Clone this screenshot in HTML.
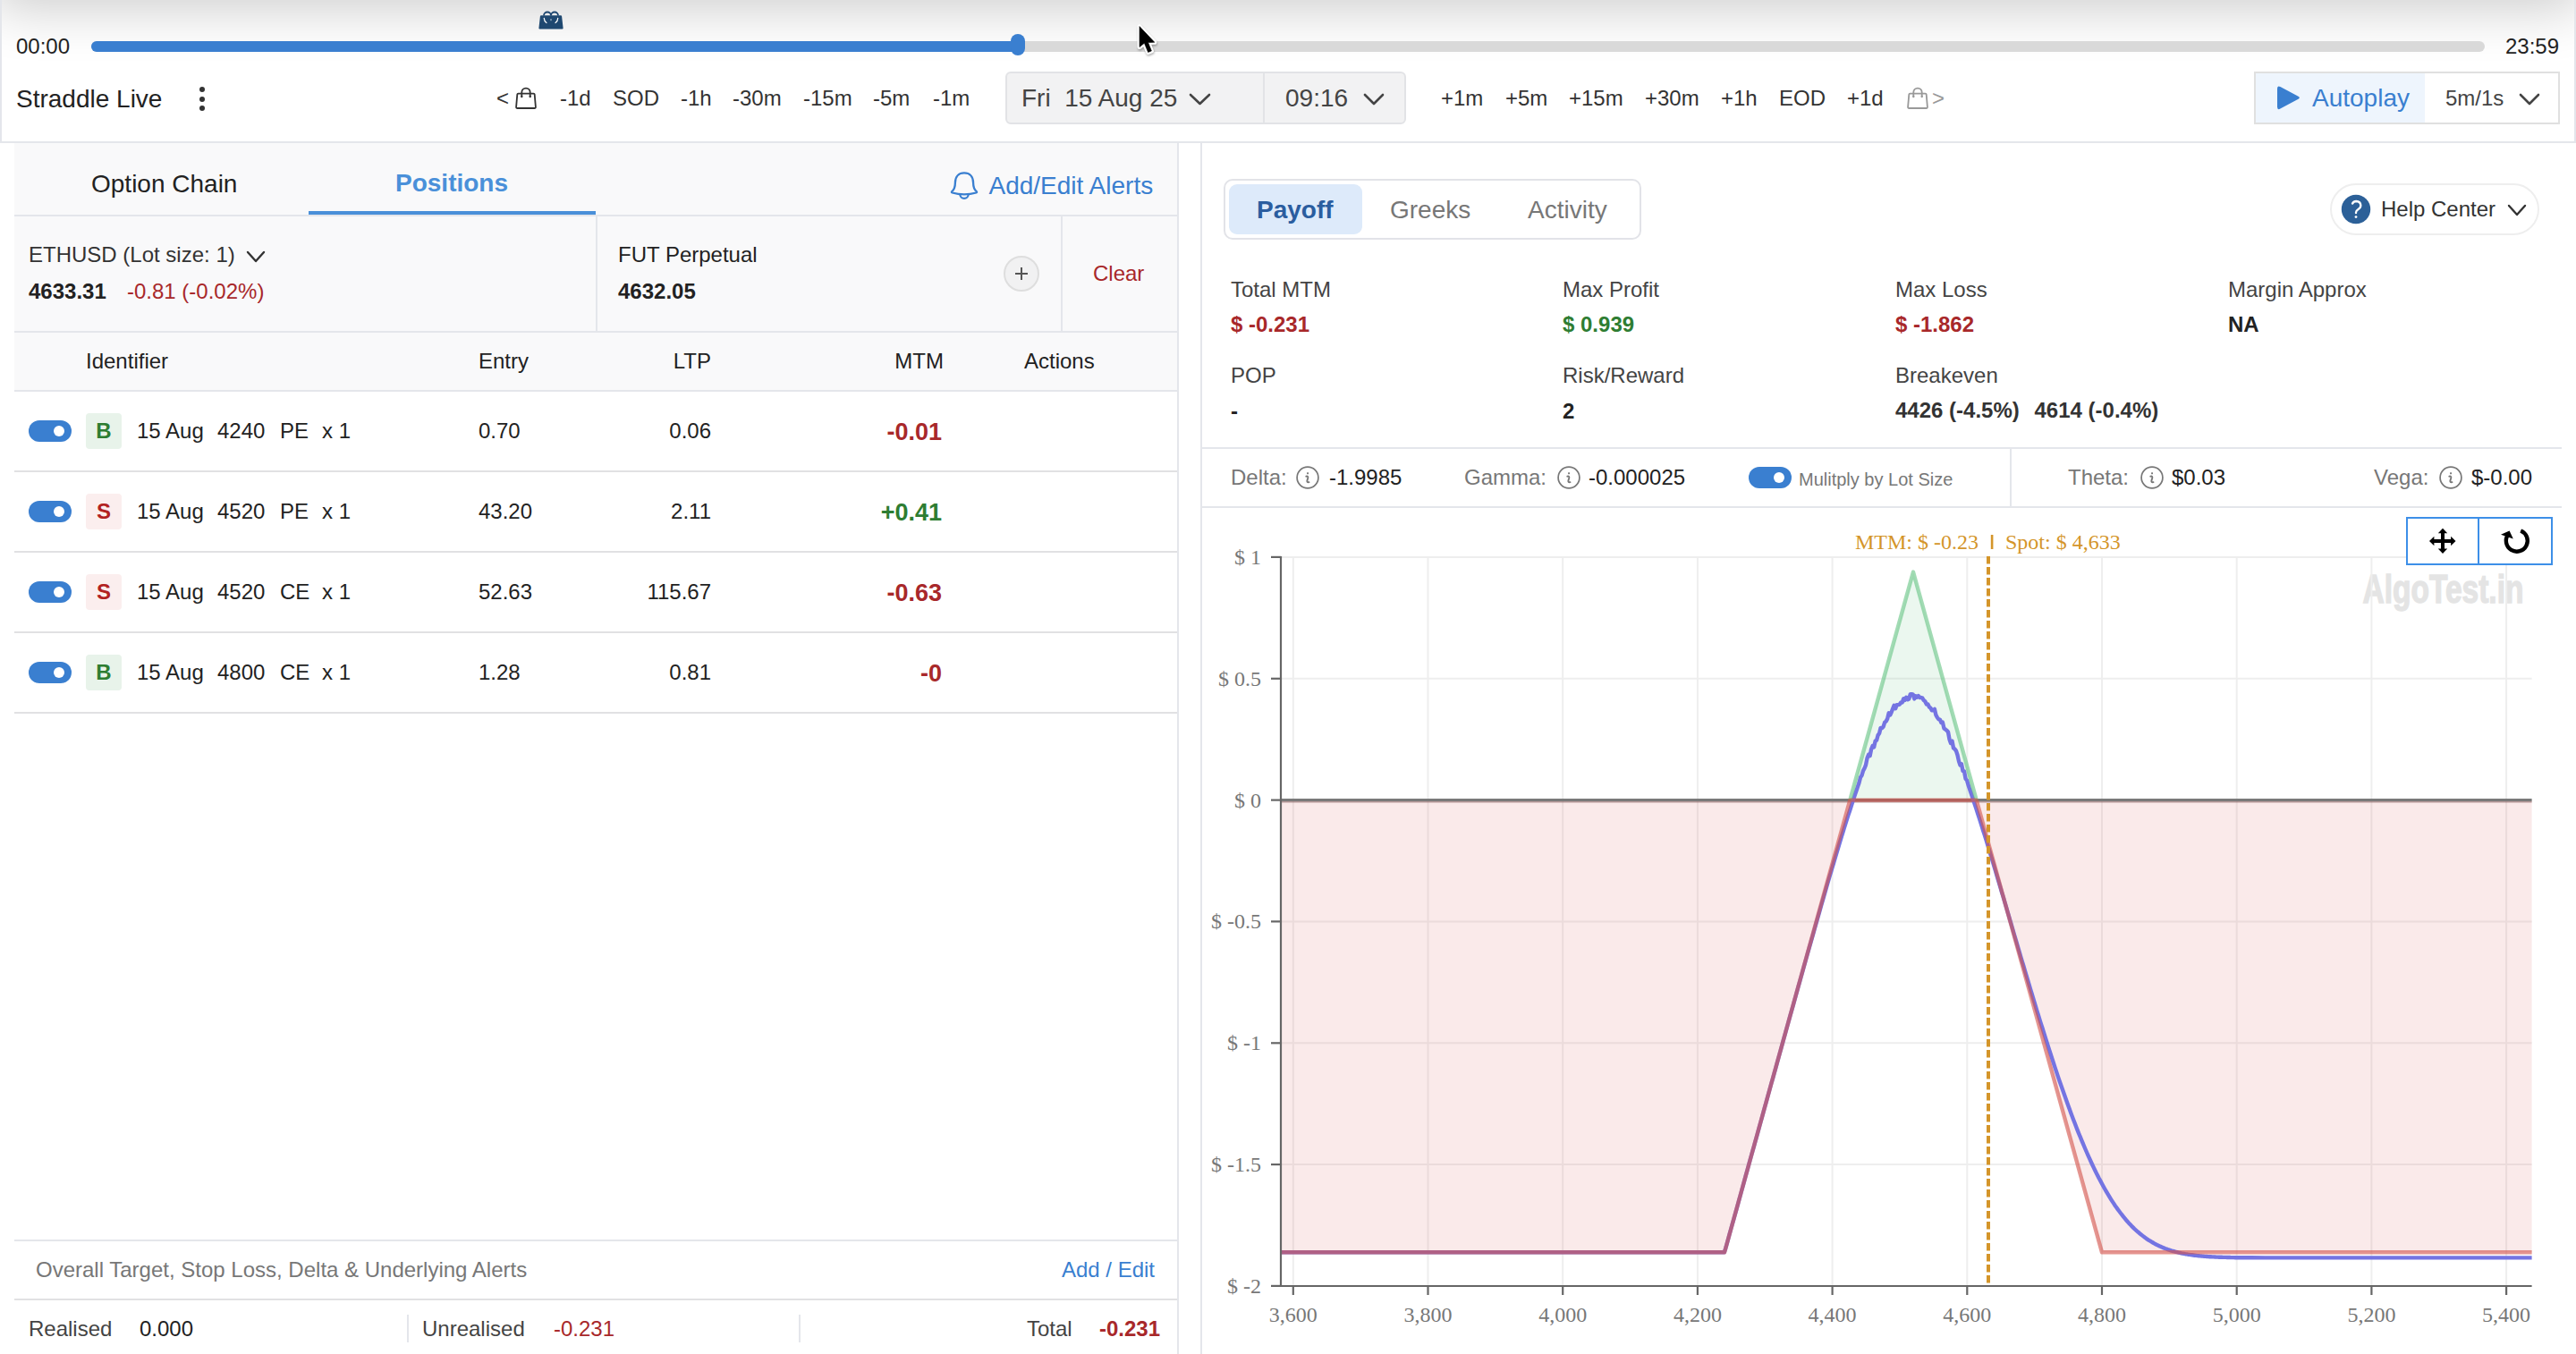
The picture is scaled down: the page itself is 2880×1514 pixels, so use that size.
<!DOCTYPE html>
<html><head><meta charset="utf-8"><title>Straddle Live</title>
<style>
html,body{margin:0;padding:0;width:2880px;height:1514px;overflow:hidden;background:#fff;font-family:"Liberation Sans", sans-serif;}
.t{position:absolute;white-space:pre;line-height:1;}
.r{position:absolute;}
</style></head><body>
<div class="r" style="left:0px;top:0px;width:2880px;height:160px;background:#fff"></div>
<div class="r" style="left:2px;top:0;width:2876px;height:158px;overflow:hidden"><div class="r" style="left:0;top:-80px;width:2876px;height:80px;background:#ccc;box-shadow:0 0 60px 10px rgba(0,0,0,0.2)"></div></div>
<div class="r" style="left:0px;top:0px;width:2px;height:160px;background:#e4e6eb"></div>
<div class="r" style="left:2878px;top:0px;width:2px;height:160px;background:#e4e6eb"></div>
<div class="r" style="left:0px;top:158px;width:2880px;height:2px;background:#e4e6eb"></div>
<div class="t" style="left:18.0px;top:39.7px;font-size:24px;color:#222;font-weight:400;font-family:'Liberation Sans', sans-serif;">00:00</div>
<div class="t" style="right:19.0px;top:39.7px;font-size:24px;color:#222;font-weight:400;font-family:'Liberation Sans', sans-serif;">23:59</div>
<div class="r" style="left:102px;top:46px;width:2676px;height:12px;background:#d9d9d9;border-radius:6px"></div>
<div class="r" style="left:102px;top:46px;width:1038px;height:12px;background:#3a7fd0;border-radius:6px 0 0 6px"></div>
<div class="r" style="left:1130px;top:38px;width:16px;height:24px;background:#3a7fd0;border-radius:8px"></div>
<svg class="r" style="left:600px;top:9px" width="32" height="26" viewBox="0 0 32 26">
<path d="M8 8.5 A4 4 0 0 1 16 8.5 A4 4 0 0 1 24 8.5" fill="none" stroke="#1d4670" stroke-width="1.8"/>
<path d="M5 8.3 L27 8.3 Q28 8.3 28.1 9.3 L29.6 22.5 Q29.7 23.6 28.5 23.6 L3.5 23.6 Q2.3 23.6 2.4 22.5 L3.9 9.3 Q4 8.3 5 8.3 Z" fill="#1f4870"/>
<path d="M8.3 11.5 Q8.5 15 11 16.5 M23.7 11.5 Q23.5 15 21 16.5" fill="none" stroke="#fff" stroke-width="1.3" stroke-linecap="round"/>
<rect x="15.3" y="12" width="1.4" height="2.2" fill="#8fa4bb"/>
</svg>
<div class="t" style="left:18.0px;top:97.3px;font-size:28px;color:#222;font-weight:400;font-family:'Liberation Sans', sans-serif;">Straddle Live</div>
<div class="r" style="left:223px;top:97px;width:6px;height:6px;background:#333;border-radius:50%"></div>
<div class="r" style="left:223px;top:107.5px;width:6px;height:6.0px;background:#333;border-radius:50%"></div>
<div class="r" style="left:223px;top:118px;width:6px;height:6px;background:#333;border-radius:50%"></div>
<div class="t" style="left:555.0px;top:97.7px;font-size:24px;color:#333;font-weight:400;font-family:'Liberation Sans', sans-serif;">&lt;</div>
<svg class="r" style="left:576px;top:97px" width="24" height="26" viewBox="0 0 24 26">
<path d="M3.5 7.6 L20.5 7.6 Q21.6 7.6 21.7 8.7 L22.9 22.6 Q23 24 21.6 24 L2.4 24 Q1 24 1.1 22.6 L2.3 8.7 Q2.4 7.6 3.5 7.6 Z" fill="none" stroke="#333" stroke-width="1.8" stroke-linejoin="round"/>
<path d="M7.3 11 L7.3 6.3 A4.7 4.7 0 0 1 16.7 6.3 L16.7 11" fill="none" stroke="#333" stroke-width="1.8"/>
<circle cx="7.3" cy="11" r="1.2" fill="#333"/><circle cx="16.7" cy="11" r="1.2" fill="#333"/>
</svg>
<div class="t" style="left:626.0px;top:97.7px;font-size:24px;color:#333;font-weight:400;font-family:'Liberation Sans', sans-serif;">-1d</div>
<div class="t" style="left:685.0px;top:97.7px;font-size:24px;color:#333;font-weight:400;font-family:'Liberation Sans', sans-serif;">SOD</div>
<div class="t" style="left:761.0px;top:97.7px;font-size:24px;color:#333;font-weight:400;font-family:'Liberation Sans', sans-serif;">-1h</div>
<div class="t" style="left:819.0px;top:97.7px;font-size:24px;color:#333;font-weight:400;font-family:'Liberation Sans', sans-serif;">-30m</div>
<div class="t" style="left:898.0px;top:97.7px;font-size:24px;color:#333;font-weight:400;font-family:'Liberation Sans', sans-serif;">-15m</div>
<div class="t" style="left:976.0px;top:97.7px;font-size:24px;color:#333;font-weight:400;font-family:'Liberation Sans', sans-serif;">-5m</div>
<div class="t" style="left:1043.0px;top:97.7px;font-size:24px;color:#333;font-weight:400;font-family:'Liberation Sans', sans-serif;">-1m</div>
<div class="t" style="left:1611.0px;top:97.7px;font-size:24px;color:#333;font-weight:400;font-family:'Liberation Sans', sans-serif;">+1m</div>
<div class="t" style="left:1683.0px;top:97.7px;font-size:24px;color:#333;font-weight:400;font-family:'Liberation Sans', sans-serif;">+5m</div>
<div class="t" style="left:1754.0px;top:97.7px;font-size:24px;color:#333;font-weight:400;font-family:'Liberation Sans', sans-serif;">+15m</div>
<div class="t" style="left:1839.0px;top:97.7px;font-size:24px;color:#333;font-weight:400;font-family:'Liberation Sans', sans-serif;">+30m</div>
<div class="t" style="left:1924.0px;top:97.7px;font-size:24px;color:#333;font-weight:400;font-family:'Liberation Sans', sans-serif;">+1h</div>
<div class="t" style="left:1989.0px;top:97.7px;font-size:24px;color:#333;font-weight:400;font-family:'Liberation Sans', sans-serif;">EOD</div>
<div class="t" style="left:2065.0px;top:97.7px;font-size:24px;color:#333;font-weight:400;font-family:'Liberation Sans', sans-serif;">+1d</div>
<svg class="r" style="left:2132px;top:97px" width="24" height="26" viewBox="0 0 24 26">
<path d="M3.5 7.6 L20.5 7.6 Q21.6 7.6 21.7 8.7 L22.9 22.6 Q23 24 21.6 24 L2.4 24 Q1 24 1.1 22.6 L2.3 8.7 Q2.4 7.6 3.5 7.6 Z" fill="none" stroke="#999" stroke-width="1.8" stroke-linejoin="round"/>
<path d="M7.3 11 L7.3 6.3 A4.7 4.7 0 0 1 16.7 6.3 L16.7 11" fill="none" stroke="#999" stroke-width="1.8"/>
<circle cx="7.3" cy="11" r="1.2" fill="#999"/><circle cx="16.7" cy="11" r="1.2" fill="#999"/>
</svg>
<div class="t" style="left:2160.0px;top:97.7px;font-size:24px;color:#999;font-weight:400;font-family:'Liberation Sans', sans-serif;">&gt;</div>
<div class="r" style="left:1124px;top:80px;width:448px;height:59px;background:#f2f2f3;border:2px solid #e2e3e6;border-radius:6px;box-sizing:border-box"></div>
<div class="r" style="left:1412px;top:82px;width:2px;height:55px;background:#e2e3e6"></div>
<div class="t" style="left:1142.0px;top:96.3px;font-size:28px;color:#444;font-weight:400;font-family:'Liberation Sans', sans-serif;">Fri&nbsp; 15 Aug 25</div>
<svg class="r" style="left:1328px;top:103px" width="27" height="16" viewBox="1328 103 27 16"><path d="M1331,106 L1341.5,116 L1352,106" fill="none" stroke="#444" stroke-width="2.6" stroke-linecap="round" stroke-linejoin="round"/></svg>
<div class="t" style="left:1437.0px;top:96.3px;font-size:28px;color:#444;font-weight:400;font-family:'Liberation Sans', sans-serif;">09:16</div>
<svg class="r" style="left:1523px;top:103px" width="26" height="16" viewBox="1523 103 26 16"><path d="M1526,106 L1536.0,116 L1546,106" fill="none" stroke="#444" stroke-width="2.6" stroke-linecap="round" stroke-linejoin="round"/></svg>
<div class="r" style="left:2520px;top:80px;width:342px;height:59px;background:#fff;border:2px solid #e0e0e0;box-sizing:border-box"></div>
<div class="r" style="left:2522px;top:82px;width:189px;height:55px;background:#eef5fd"></div>
<svg class="r" style="left:2543px;top:94px" width="32" height="32" viewBox="0 0 32 32"><path d="M3 5 Q3 1.2 6.4 3 L26.5 13.8 Q29.2 15.3 26.5 16.8 L6.4 27.6 Q3 29.4 3 25.6 Z" fill="#3a7fd0"/></svg>
<div class="t" style="left:2585.0px;top:96.3px;font-size:28px;color:#3a7fd0;font-weight:400;font-family:'Liberation Sans', sans-serif;">Autoplay</div>
<div class="t" style="left:2734.0px;top:98.2px;font-size:24px;color:#444;font-weight:400;font-family:'Liberation Sans', sans-serif;">5m/1s</div>
<svg class="r" style="left:2815px;top:103px" width="26" height="16" viewBox="2815 103 26 16"><path d="M2818,106 L2828.0,116 L2838,106" fill="none" stroke="#444" stroke-width="2.6" stroke-linecap="round" stroke-linejoin="round"/></svg>
<svg class="r" style="left:1262px;top:20px" width="40" height="50" viewBox="1262 20 40 50">
<defs><filter id="sh" x="-50%" y="-50%" width="200%" height="200%"><feGaussianBlur stdDeviation="1.3"/></filter></defs>
<path d="M1274,29.6 L1274,52.6 L1279.4,48.2 L1283.6,58.4 L1287.4,56.9 L1283.6,47.6 L1290.8,47.3 Z" fill="none" stroke="rgba(0,0,0,0.3)" stroke-width="5" stroke-linejoin="round" transform="translate(0.6,1.6)" filter="url(#sh)"/>
<path d="M1274,29.6 L1274,52.6 L1279.4,48.2 L1283.6,58.4 L1287.4,56.9 L1283.6,47.6 L1290.8,47.3 Z" fill="#fff" stroke="#fff" stroke-width="5" stroke-linejoin="round"/>
<path d="M1274,29.6 L1274,52.6 L1279.4,48.2 L1283.6,58.4 L1287.4,56.9 L1283.6,47.6 L1290.8,47.3 Z" fill="#000" stroke="#000" stroke-width="0.6" stroke-linejoin="round"/>
</svg>
<div class="r" style="left:16px;top:160px;width:1302px;height:1354px;background:#fff"></div>
<div class="r" style="left:16px;top:160px;width:1300px;height:277px;background:#f9f9fa"></div>
<div class="r" style="left:1316px;top:160px;width:2px;height:1354px;background:#e4e6eb"></div>
<div class="t" style="left:102.0px;top:192.3px;font-size:28px;color:#222;font-weight:400;font-family:'Liberation Sans', sans-serif;">Option Chain</div>
<div class="t" style="left:442.0px;top:190.7px;font-size:28px;color:#4a90d9;font-weight:700;font-family:'Liberation Sans', sans-serif;">Positions</div>
<div class="r" style="left:345px;top:236px;width:321px;height:4px;background:#4a90d9"></div>
<div class="r" style="left:16px;top:240px;width:1300px;height:2px;background:#e4e6eb"></div>
<svg class="r" style="left:1061px;top:190px" width="34" height="36" viewBox="0 0 34 36">
<path d="M6.9,14.5 C6.9,7.2 11,3.4 17,3.4 C23,3.4 27.1,7.2 27.1,14.5 C27.1,19.5 28,21.8 30.8,24.2 Q31.6,25.1 30.4,25.5 Q24,27.3 17,27.3 Q10,27.3 3.6,25.5 Q2.4,25.1 3.2,24.2 C6,21.8 6.9,19.5 6.9,14.5 Z" fill="none" stroke="#3a7fd0" stroke-width="2.3" stroke-linejoin="round"/>
<path d="M12.3,27.2 A4.7,4.7 0 0 0 21.7,27.2" fill="none" stroke="#3a7fd0" stroke-width="2.3"/>
</svg>
<div class="t" style="left:1105.5px;top:194.3px;font-size:28px;color:#3a7fd0;font-weight:400;font-family:'Liberation Sans', sans-serif;">Add/Edit Alerts</div>
<div class="r" style="left:666px;top:242px;width:2px;height:128px;background:#e4e6eb"></div>
<div class="r" style="left:1186px;top:242px;width:2px;height:128px;background:#e4e6eb"></div>
<div class="t" style="left:32.0px;top:273.2px;font-size:24px;color:#333;font-weight:400;font-family:'Liberation Sans', sans-serif;">ETHUSD (Lot size: 1)</div>
<svg class="r" style="left:274px;top:279px" width="24" height="16" viewBox="274 279 24 16"><path d="M277,282 L286.0,292 L295,282" fill="none" stroke="#333" stroke-width="2.4" stroke-linecap="round" stroke-linejoin="round"/></svg>
<div class="t" style="left:32.0px;top:313.7px;font-size:24px;color:#222;font-weight:700;font-family:'Liberation Sans', sans-serif;">4633.31</div>
<div class="t" style="left:142.0px;top:313.7px;font-size:24px;color:#a8282a;font-weight:400;font-family:'Liberation Sans', sans-serif;">-0.81 (-0.02%)</div>
<div class="t" style="left:691.0px;top:273.2px;font-size:24px;color:#222;font-weight:400;font-family:'Liberation Sans', sans-serif;">FUT Perpetual</div>
<div class="t" style="left:691.0px;top:313.7px;font-size:24px;color:#222;font-weight:700;font-family:'Liberation Sans', sans-serif;">4632.05</div>
<div class="r" style="left:1122px;top:286px;width:40px;height:40px;background:#f1f1f2;border:2px solid #dedede;border-radius:50%;box-sizing:border-box"></div>
<div class="r" style="left:1135px;top:305px;width:14px;height:1.6000000000000227px;background:#555"></div>
<div class="r" style="left:1141.2px;top:299px;width:1.599999999999909px;height:14px;background:#555"></div>
<div class="t" style="left:1222.0px;top:293.7px;font-size:24px;color:#a8282a;font-weight:400;font-family:'Liberation Sans', sans-serif;">Clear</div>
<div class="r" style="left:16px;top:370px;width:1300px;height:2px;background:#e4e6eb"></div>
<div class="t" style="left:96.0px;top:391.7px;font-size:24px;color:#222;font-weight:400;font-family:'Liberation Sans', sans-serif;">Identifier</div>
<div class="t" style="left:535.0px;top:391.7px;font-size:24px;color:#222;font-weight:400;font-family:'Liberation Sans', sans-serif;">Entry</div>
<div class="t" style="right:2085.0px;top:391.7px;font-size:24px;color:#222;font-weight:400;font-family:'Liberation Sans', sans-serif;">LTP</div>
<div class="t" style="right:1825.0px;top:391.7px;font-size:24px;color:#222;font-weight:400;font-family:'Liberation Sans', sans-serif;">MTM</div>
<div class="t" style="left:1145.0px;top:391.7px;font-size:24px;color:#222;font-weight:400;font-family:'Liberation Sans', sans-serif;">Actions</div>
<div class="r" style="left:16px;top:436px;width:1300px;height:2px;background:#e4e6eb"></div>
<div class="r" style="left:16px;top:526px;width:1300px;height:2px;background:#e1e1e3"></div>
<div class="r" style="left:32px;top:470px;width:48px;height:24px;background:#3a7fd0;border-radius:12px"></div>
<div class="r" style="left:60px;top:476px;width:12px;height:12px;background:#fff;border-radius:50%"></div>
<div class="r" style="left:96px;top:462px;width:40px;height:40px;background:#e8f3ea;border-radius:4px"></div>
<div class="t" style="left:116.0px;transform:translateX(-50%);top:469.8px;font-size:24px;color:#2e7d32;font-weight:700;font-family:'Liberation Sans', sans-serif;">B</div>
<div class="t" style="left:153.0px;top:469.8px;font-size:24px;color:#222;font-weight:400;font-family:'Liberation Sans', sans-serif;">15 Aug</div>
<div class="t" style="left:243.0px;top:469.8px;font-size:24px;color:#222;font-weight:400;font-family:'Liberation Sans', sans-serif;">4240</div>
<div class="t" style="left:313.0px;top:469.8px;font-size:24px;color:#222;font-weight:400;font-family:'Liberation Sans', sans-serif;">PE</div>
<div class="t" style="left:360.0px;top:469.8px;font-size:24px;color:#222;font-weight:400;font-family:'Liberation Sans', sans-serif;">x 1</div>
<div class="t" style="left:535.0px;top:469.8px;font-size:24px;color:#222;font-weight:400;font-family:'Liberation Sans', sans-serif;">0.70</div>
<div class="t" style="right:2085.0px;top:469.8px;font-size:24px;color:#222;font-weight:400;font-family:'Liberation Sans', sans-serif;">0.06</div>
<div class="t" style="right:1827.0px;top:469.6px;font-size:27px;color:#a8282a;font-weight:700;font-family:'Liberation Sans', sans-serif;">-0.01</div>
<div class="r" style="left:16px;top:616px;width:1300px;height:2px;background:#e1e1e3"></div>
<div class="r" style="left:32px;top:560px;width:48px;height:24px;background:#3a7fd0;border-radius:12px"></div>
<div class="r" style="left:60px;top:566px;width:12px;height:12px;background:#fff;border-radius:50%"></div>
<div class="r" style="left:96px;top:552px;width:40px;height:40px;background:#fbeeee;border-radius:4px"></div>
<div class="t" style="left:116.0px;transform:translateX(-50%);top:559.8px;font-size:24px;color:#b22222;font-weight:700;font-family:'Liberation Sans', sans-serif;">S</div>
<div class="t" style="left:153.0px;top:559.8px;font-size:24px;color:#222;font-weight:400;font-family:'Liberation Sans', sans-serif;">15 Aug</div>
<div class="t" style="left:243.0px;top:559.8px;font-size:24px;color:#222;font-weight:400;font-family:'Liberation Sans', sans-serif;">4520</div>
<div class="t" style="left:313.0px;top:559.8px;font-size:24px;color:#222;font-weight:400;font-family:'Liberation Sans', sans-serif;">PE</div>
<div class="t" style="left:360.0px;top:559.8px;font-size:24px;color:#222;font-weight:400;font-family:'Liberation Sans', sans-serif;">x 1</div>
<div class="t" style="left:535.0px;top:559.8px;font-size:24px;color:#222;font-weight:400;font-family:'Liberation Sans', sans-serif;">43.20</div>
<div class="t" style="right:2085.0px;top:559.8px;font-size:24px;color:#222;font-weight:400;font-family:'Liberation Sans', sans-serif;">2.11</div>
<div class="t" style="right:1827.0px;top:559.6px;font-size:27px;color:#2e7d32;font-weight:700;font-family:'Liberation Sans', sans-serif;">+0.41</div>
<div class="r" style="left:16px;top:706px;width:1300px;height:2px;background:#e1e1e3"></div>
<div class="r" style="left:32px;top:650px;width:48px;height:24px;background:#3a7fd0;border-radius:12px"></div>
<div class="r" style="left:60px;top:656px;width:12px;height:12px;background:#fff;border-radius:50%"></div>
<div class="r" style="left:96px;top:642px;width:40px;height:40px;background:#fbeeee;border-radius:4px"></div>
<div class="t" style="left:116.0px;transform:translateX(-50%);top:649.8px;font-size:24px;color:#b22222;font-weight:700;font-family:'Liberation Sans', sans-serif;">S</div>
<div class="t" style="left:153.0px;top:649.8px;font-size:24px;color:#222;font-weight:400;font-family:'Liberation Sans', sans-serif;">15 Aug</div>
<div class="t" style="left:243.0px;top:649.8px;font-size:24px;color:#222;font-weight:400;font-family:'Liberation Sans', sans-serif;">4520</div>
<div class="t" style="left:313.0px;top:649.8px;font-size:24px;color:#222;font-weight:400;font-family:'Liberation Sans', sans-serif;">CE</div>
<div class="t" style="left:360.0px;top:649.8px;font-size:24px;color:#222;font-weight:400;font-family:'Liberation Sans', sans-serif;">x 1</div>
<div class="t" style="left:535.0px;top:649.8px;font-size:24px;color:#222;font-weight:400;font-family:'Liberation Sans', sans-serif;">52.63</div>
<div class="t" style="right:2085.0px;top:649.8px;font-size:24px;color:#222;font-weight:400;font-family:'Liberation Sans', sans-serif;">115.67</div>
<div class="t" style="right:1827.0px;top:649.6px;font-size:27px;color:#a8282a;font-weight:700;font-family:'Liberation Sans', sans-serif;">-0.63</div>
<div class="r" style="left:16px;top:796px;width:1300px;height:2px;background:#e1e1e3"></div>
<div class="r" style="left:32px;top:740px;width:48px;height:24px;background:#3a7fd0;border-radius:12px"></div>
<div class="r" style="left:60px;top:746px;width:12px;height:12px;background:#fff;border-radius:50%"></div>
<div class="r" style="left:96px;top:732px;width:40px;height:40px;background:#e8f3ea;border-radius:4px"></div>
<div class="t" style="left:116.0px;transform:translateX(-50%);top:739.8px;font-size:24px;color:#2e7d32;font-weight:700;font-family:'Liberation Sans', sans-serif;">B</div>
<div class="t" style="left:153.0px;top:739.8px;font-size:24px;color:#222;font-weight:400;font-family:'Liberation Sans', sans-serif;">15 Aug</div>
<div class="t" style="left:243.0px;top:739.8px;font-size:24px;color:#222;font-weight:400;font-family:'Liberation Sans', sans-serif;">4800</div>
<div class="t" style="left:313.0px;top:739.8px;font-size:24px;color:#222;font-weight:400;font-family:'Liberation Sans', sans-serif;">CE</div>
<div class="t" style="left:360.0px;top:739.8px;font-size:24px;color:#222;font-weight:400;font-family:'Liberation Sans', sans-serif;">x 1</div>
<div class="t" style="left:535.0px;top:739.8px;font-size:24px;color:#222;font-weight:400;font-family:'Liberation Sans', sans-serif;">1.28</div>
<div class="t" style="right:2085.0px;top:739.8px;font-size:24px;color:#222;font-weight:400;font-family:'Liberation Sans', sans-serif;">0.81</div>
<div class="t" style="right:1827.0px;top:739.6px;font-size:27px;color:#a8282a;font-weight:700;font-family:'Liberation Sans', sans-serif;">-0</div>
<div class="r" style="left:16px;top:1386px;width:1300px;height:2px;background:#e4e6eb"></div>
<div class="t" style="left:40.0px;top:1407.7px;font-size:24px;color:#777;font-weight:400;font-family:'Liberation Sans', sans-serif;">Overall Target, Stop Loss, Delta &amp; Underlying Alerts</div>
<div class="t" style="right:1589.0px;top:1407.7px;font-size:24px;color:#3a7fd0;font-weight:400;font-family:'Liberation Sans', sans-serif;">Add / Edit</div>
<div class="r" style="left:16px;top:1452px;width:1300px;height:2px;background:#e1e1e3"></div>
<div class="t" style="left:32.0px;top:1474.2px;font-size:24px;color:#444;font-weight:400;font-family:'Liberation Sans', sans-serif;">Realised</div>
<div class="t" style="left:156.0px;top:1474.2px;font-size:24px;color:#222;font-weight:400;font-family:'Liberation Sans', sans-serif;">0.000</div>
<div class="r" style="left:455px;top:1470px;width:2px;height:31px;background:#e4e6eb"></div>
<div class="t" style="left:472.0px;top:1474.2px;font-size:24px;color:#444;font-weight:400;font-family:'Liberation Sans', sans-serif;">Unrealised</div>
<div class="t" style="left:619.0px;top:1474.2px;font-size:24px;color:#a8282a;font-weight:400;font-family:'Liberation Sans', sans-serif;">-0.231</div>
<div class="r" style="left:893px;top:1470px;width:2px;height:31px;background:#e4e6eb"></div>
<div class="t" style="left:1148.0px;top:1474.2px;font-size:24px;color:#444;font-weight:400;font-family:'Liberation Sans', sans-serif;">Total</div>
<div class="t" style="right:1583.0px;top:1474.2px;font-size:24px;color:#a8282a;font-weight:700;font-family:'Liberation Sans', sans-serif;">-0.231</div>
<div class="r" style="left:1342px;top:160px;width:2px;height:1354px;background:#e4e6eb"></div>
<div class="r" style="left:1368px;top:200px;width:467px;height:68px;border:2px solid #e2e3e8;border-radius:10px;box-sizing:border-box;background:#fff"></div>
<div class="r" style="left:1374px;top:206px;width:149px;height:56px;background:#ddeafa;border-radius:9px"></div>
<div class="t" style="left:1405.0px;top:220.9px;font-size:28px;color:#2a5d9f;font-weight:700;font-family:'Liberation Sans', sans-serif;">Payoff</div>
<div class="t" style="left:1554.0px;top:220.9px;font-size:28px;color:#777;font-weight:400;font-family:'Liberation Sans', sans-serif;">Greeks</div>
<div class="t" style="left:1708.0px;top:220.9px;font-size:28px;color:#777;font-weight:400;font-family:'Liberation Sans', sans-serif;">Activity</div>
<div class="r" style="left:2605px;top:205px;width:234px;height:58px;border:2px solid #eeeeee;border-radius:29px;box-sizing:border-box"></div>
<svg class="r" style="left:2610px;top:210px" width="48" height="48" viewBox="2610 210 48 48"><circle cx="2634" cy="234" r="16.2" fill="#2c6098"/><path d="M2630,227.6 Q2631.4,225 2634.3,225 Q2639,225.2 2639.3,229.4 Q2639.5,232.2 2636.6,234 Q2634,235.7 2634,237.4 L2634,238.2" fill="none" stroke="#fff" stroke-width="2.3" stroke-linecap="round" stroke-linejoin="round"/><circle cx="2634" cy="242.6" r="1.4" fill="#fff"/></svg>
<div class="t" style="left:2662.0px;top:221.9px;font-size:24px;color:#333;font-weight:400;font-family:'Liberation Sans', sans-serif;">Help Center</div>
<svg class="r" style="left:2802px;top:227px" width="24" height="16" viewBox="2802 227 24 16"><path d="M2805,230 L2814.0,240 L2823,230" fill="none" stroke="#333" stroke-width="2.4" stroke-linecap="round" stroke-linejoin="round"/></svg>
<div class="t" style="left:1376.0px;top:311.7px;font-size:24px;color:#444;font-weight:400;font-family:'Liberation Sans', sans-serif;">Total MTM</div>
<div class="t" style="left:1376.0px;top:351.2px;font-size:24px;color:#a8282a;font-weight:700;font-family:'Liberation Sans', sans-serif;">$ -0.231</div>
<div class="t" style="left:1747.0px;top:311.7px;font-size:24px;color:#444;font-weight:400;font-family:'Liberation Sans', sans-serif;">Max Profit</div>
<div class="t" style="left:1747.0px;top:351.2px;font-size:24px;color:#2e7d32;font-weight:700;font-family:'Liberation Sans', sans-serif;">$ 0.939</div>
<div class="t" style="left:2119.0px;top:311.7px;font-size:24px;color:#444;font-weight:400;font-family:'Liberation Sans', sans-serif;">Max Loss</div>
<div class="t" style="left:2119.0px;top:351.2px;font-size:24px;color:#a8282a;font-weight:700;font-family:'Liberation Sans', sans-serif;">$ -1.862</div>
<div class="t" style="left:2491.0px;top:311.7px;font-size:24px;color:#444;font-weight:400;font-family:'Liberation Sans', sans-serif;">Margin Approx</div>
<div class="t" style="left:2491.0px;top:351.2px;font-size:24px;color:#222;font-weight:700;font-family:'Liberation Sans', sans-serif;">NA</div>
<div class="t" style="left:1376.0px;top:408.1px;font-size:24px;color:#444;font-weight:400;font-family:'Liberation Sans', sans-serif;">POP</div>
<div class="t" style="left:1376.0px;top:447.7px;font-size:24px;color:#222;font-weight:700;font-family:'Liberation Sans', sans-serif;">-</div>
<div class="t" style="left:1747.0px;top:408.1px;font-size:24px;color:#444;font-weight:400;font-family:'Liberation Sans', sans-serif;">Risk/Reward</div>
<div class="t" style="left:1747.0px;top:447.7px;font-size:24px;color:#222;font-weight:700;font-family:'Liberation Sans', sans-serif;">2</div>
<div class="t" style="left:2119.0px;top:408.1px;font-size:24px;color:#444;font-weight:400;font-family:'Liberation Sans', sans-serif;">Breakeven</div>
<div class="t" style="left:2119.0px;top:447.3px;font-size:24px;color:#333;font-weight:700;font-family:'Liberation Sans', sans-serif;">4426 (-4.5%)</div>
<div class="t" style="left:2274.5px;top:447.3px;font-size:24px;color:#333;font-weight:700;font-family:'Liberation Sans', sans-serif;">4614 (-0.4%)</div>
<div class="r" style="left:1344px;top:500px;width:1520px;height:2px;background:#e4e6eb"></div>
<div class="t" style="left:1376.0px;top:522.2px;font-size:24px;color:#777;font-weight:400;font-family:'Liberation Sans', sans-serif;">Delta:</div>
<svg class="r" style="left:1449px;top:521px" width="26" height="26" viewBox="0 0 26 26"><circle cx="13" cy="13" r="11.9" fill="none" stroke="#777" stroke-width="1.7"/><rect x="12.1" y="7.3" width="1.9" height="1.9" fill="#777"/><path d="M11.3,11.7 Q13.6,10.9 13.3,13.2 L12.4,16.4 Q12,18.7 14.5,18.1" fill="none" stroke="#777" stroke-width="1.9" stroke-linecap="round"/></svg>
<div class="t" style="left:1486.0px;top:522.2px;font-size:24px;color:#222;font-weight:400;font-family:'Liberation Sans', sans-serif;">-1.9985</div>
<div class="t" style="left:1637.0px;top:522.2px;font-size:24px;color:#777;font-weight:400;font-family:'Liberation Sans', sans-serif;">Gamma:</div>
<svg class="r" style="left:1741px;top:521px" width="26" height="26" viewBox="0 0 26 26"><circle cx="13" cy="13" r="11.9" fill="none" stroke="#777" stroke-width="1.7"/><rect x="12.1" y="7.3" width="1.9" height="1.9" fill="#777"/><path d="M11.3,11.7 Q13.6,10.9 13.3,13.2 L12.4,16.4 Q12,18.7 14.5,18.1" fill="none" stroke="#777" stroke-width="1.9" stroke-linecap="round"/></svg>
<div class="t" style="left:1776.0px;top:522.2px;font-size:24px;color:#222;font-weight:400;font-family:'Liberation Sans', sans-serif;">-0.000025</div>
<div class="r" style="left:1955px;top:522px;width:48px;height:24px;background:#3a7fd0;border-radius:12px"></div>
<div class="r" style="left:1983px;top:528px;width:12px;height:12px;background:#fff;border-radius:50%"></div>
<div class="t" style="left:2011.0px;top:525.5px;font-size:20px;color:#777;font-weight:400;font-family:'Liberation Sans', sans-serif;">Mulitply by Lot Size</div>
<div class="r" style="left:2247px;top:502px;width:2px;height:64px;background:#e4e6eb"></div>
<div class="t" style="left:2312.0px;top:522.2px;font-size:24px;color:#777;font-weight:400;font-family:'Liberation Sans', sans-serif;">Theta:</div>
<svg class="r" style="left:2393px;top:521px" width="26" height="26" viewBox="0 0 26 26"><circle cx="13" cy="13" r="11.9" fill="none" stroke="#777" stroke-width="1.7"/><rect x="12.1" y="7.3" width="1.9" height="1.9" fill="#777"/><path d="M11.3,11.7 Q13.6,10.9 13.3,13.2 L12.4,16.4 Q12,18.7 14.5,18.1" fill="none" stroke="#777" stroke-width="1.9" stroke-linecap="round"/></svg>
<div class="t" style="left:2428.0px;top:522.2px;font-size:24px;color:#222;font-weight:400;font-family:'Liberation Sans', sans-serif;">$0.03</div>
<div class="t" style="left:2654.0px;top:522.2px;font-size:24px;color:#777;font-weight:400;font-family:'Liberation Sans', sans-serif;">Vega:</div>
<svg class="r" style="left:2727px;top:521px" width="26" height="26" viewBox="0 0 26 26"><circle cx="13" cy="13" r="11.9" fill="none" stroke="#777" stroke-width="1.7"/><rect x="12.1" y="7.3" width="1.9" height="1.9" fill="#777"/><path d="M11.3,11.7 Q13.6,10.9 13.3,13.2 L12.4,16.4 Q12,18.7 14.5,18.1" fill="none" stroke="#777" stroke-width="1.9" stroke-linecap="round"/></svg>
<div class="t" style="left:2763.0px;top:522.2px;font-size:24px;color:#222;font-weight:400;font-family:'Liberation Sans', sans-serif;">$-0.00</div>
<div class="r" style="left:1344px;top:566px;width:1520px;height:2px;background:#e4e6eb"></div>
<svg class="r" style="left:1344px;top:568px" width="1536" height="946" viewBox="1344 568 1536 946">
<text x="0" y="0" font-family="Liberation Sans" font-weight="700" font-size="45" fill="#e4e4e4" stroke="#e4e4e4" stroke-width="1.4" transform="translate(2641.5,673.9) scale(0.745,1)">AlgoTest.in</text>
<line x1="1445.8" y1="623" x2="1445.8" y2="1438" stroke="#eeeeee" stroke-width="2"/>
<line x1="1596.5" y1="623" x2="1596.5" y2="1438" stroke="#eeeeee" stroke-width="2"/>
<line x1="1747.2" y1="623" x2="1747.2" y2="1438" stroke="#eeeeee" stroke-width="2"/>
<line x1="1897.9" y1="623" x2="1897.9" y2="1438" stroke="#eeeeee" stroke-width="2"/>
<line x1="2048.6" y1="623" x2="2048.6" y2="1438" stroke="#eeeeee" stroke-width="2"/>
<line x1="2199.3" y1="623" x2="2199.3" y2="1438" stroke="#eeeeee" stroke-width="2"/>
<line x1="2350.0" y1="623" x2="2350.0" y2="1438" stroke="#eeeeee" stroke-width="2"/>
<line x1="2500.7" y1="623" x2="2500.7" y2="1438" stroke="#eeeeee" stroke-width="2"/>
<line x1="2651.4" y1="623" x2="2651.4" y2="1438" stroke="#eeeeee" stroke-width="2"/>
<line x1="2802.1" y1="623" x2="2802.1" y2="1438" stroke="#eeeeee" stroke-width="2"/>
<line x1="1432" y1="622.9" x2="2830.6" y2="622.9" stroke="#eeeeee" stroke-width="2"/>
<line x1="1432" y1="758.8" x2="2830.6" y2="758.8" stroke="#eeeeee" stroke-width="2"/>
<line x1="1432" y1="1030.4" x2="2830.6" y2="1030.4" stroke="#eeeeee" stroke-width="2"/>
<line x1="1432" y1="1166.3" x2="2830.6" y2="1166.3" stroke="#eeeeee" stroke-width="2"/>
<line x1="1432" y1="1302.1" x2="2830.6" y2="1302.1" stroke="#eeeeee" stroke-width="2"/>
<path d="M1432.0,894.6 1432.0,1400.3 L1928.0,1400.3 L2068.3,894.6 L2209.7,894.6 L2350.0,1400.3 L2830.6,1400.3 L2830.6,894.6 Z" fill="rgba(214,90,90,0.13)"/>
<path d="M2068.3,894.6 L2139.0,639.6 L2209.7,894.6 Z" fill="rgba(90,190,120,0.12)"/>
<line x1="1432" y1="894.6" x2="2830.6" y2="894.6" stroke="#7a7a7a" stroke-width="3"/>
<line x1="1432" y1="896.8" x2="2830.6" y2="896.8" stroke="rgba(140,100,100,0.6)" stroke-width="1.6"/>
<path d="M1432.0,1400.3 L1447.1,1400.3 L1462.1,1400.3 L1477.2,1400.3 L1492.3,1400.3 L1507.3,1400.3 L1522.4,1400.3 L1537.5,1400.3 L1552.6,1400.3 L1567.6,1400.3 L1582.7,1400.3 L1597.8,1400.3 L1612.8,1400.3 L1627.9,1400.3 L1643.0,1400.3 L1658.0,1400.3 L1673.1,1400.3 L1688.2,1400.3 L1703.3,1400.3 L1718.3,1400.3 L1733.4,1400.3 L1748.5,1400.3 L1763.5,1400.3 L1778.6,1400.3 L1793.7,1400.3 L1808.8,1400.3 L1823.8,1400.3 L1838.9,1400.3 L1854.0,1400.3 L1869.0,1400.3 L1884.1,1400.3 L1899.2,1400.3 L1900.7,1400.3 L1902.2,1400.3 L1903.7,1400.3 L1905.2,1400.3 L1906.7,1400.3 L1908.2,1400.3 L1909.7,1400.3 L1911.2,1400.3 L1912.7,1400.3 L1914.2,1400.3 L1915.7,1400.3 L1917.3,1400.3 L1918.8,1400.3 L1920.3,1400.3 L1921.8,1400.3 L1923.3,1400.3 L1924.8,1400.3 L1926.3,1400.3 L1927.8,1400.3 L1929.3,1395.7 L1930.8,1390.3 L1932.3,1384.9 L1933.8,1379.4 L1935.3,1374.0 L1936.8,1368.6 L1938.4,1363.1 L1939.9,1357.7 L1941.4,1352.3 L1942.9,1346.8 L1944.4,1341.4 L1945.9,1336.0 L1947.4,1330.5 L1948.9,1325.1 L1950.4,1319.7 L1951.9,1314.2 L1953.4,1308.8 L1954.9,1303.4 L1956.4,1297.9 L1957.9,1292.5 L1959.4,1287.1 L1961.0,1281.6 L1962.5,1276.2 L1964.0,1270.8 L1965.5,1265.3 L1967.0,1259.9 L1968.5,1254.5 L1970.0,1249.1 L1971.5,1243.6 L1973.0,1238.2 L1974.5,1232.8 L1976.0,1227.3 L1977.5,1221.9 L1979.0,1216.5 L1980.5,1211.0 L1982.1,1205.6 L1983.6,1200.2 L1985.1,1194.8 L1986.6,1189.3 L1988.1,1183.9 L1989.6,1178.5 L1991.1,1173.1 L1992.6,1167.6 L1994.1,1162.2 L1995.6,1156.8 L1997.1,1151.4 L1998.6,1146.0 L2000.1,1140.6 L2001.6,1135.2 L2003.2,1129.7 L2004.7,1124.3 L2006.2,1118.9 L2007.7,1113.5 L2009.2,1108.1 L2010.7,1102.7 L2012.2,1097.4 L2013.7,1092.0 L2015.2,1086.6 L2016.7,1081.2 L2018.2,1075.9 L2019.7,1070.5 L2021.2,1065.1 L2022.7,1059.8 L2024.3,1054.4 L2025.8,1049.1 L2027.3,1043.8 L2028.8,1038.5 L2030.3,1033.1 L2031.8,1027.9 L2033.3,1022.6 L2034.8,1017.3 L2036.3,1012.0 L2037.8,1006.8 L2039.3,1001.6 L2040.8,996.3 L2042.3,991.1 L2043.8,986.0 L2045.3,980.8 L2046.9,975.7 L2048.4,970.5 L2049.9,965.5 L2051.4,960.4 L2052.9,955.3 L2054.4,950.3 L2055.9,945.3 L2057.4,940.4 L2058.9,935.4 L2060.4,930.6 L2061.9,925.7 L2063.4,920.9 L2064.9,916.1 L2066.4,911.4 L2068.0,906.7 L2069.5,902.0 L2071.0,897.4 L2072.5,892.9 L2074.0,888.4 L2075.5,884.0 L2077.0,879.6 L2078.5,875.2 L2080.0,869.3 L2081.5,867.1 L2083.0,861.8 L2084.5,859.2 L2086.0,855.4 L2087.5,847.9 L2089.1,843.7 L2090.6,845.2 L2092.1,837.8 L2093.6,834.1 L2095.1,835.4 L2096.6,828.7 L2098.1,827.7 L2099.6,822.1 L2101.1,820.0 L2102.6,813.9 L2104.1,814.0 L2105.6,812.7 L2107.1,807.8 L2108.6,806.6 L2110.2,803.6 L2111.7,797.3 L2113.2,799.5 L2114.7,796.3 L2116.2,792.4 L2117.7,788.7 L2119.2,792.3 L2120.7,788.1 L2122.2,788.1 L2123.7,787.7 L2125.2,785.4 L2126.7,785.5 L2128.2,781.2 L2129.7,782.9 L2131.2,779.8 L2132.8,782.3 L2134.3,781.5 L2135.8,776.1 L2137.3,776.1 L2138.8,776.6 L2140.3,781.4 L2141.8,778.2 L2143.3,779.7 L2144.8,778.1 L2146.3,780.0 L2147.8,779.9 L2149.3,780.6 L2150.8,783.1 L2152.3,784.2 L2153.9,787.5 L2155.4,787.4 L2156.9,790.5 L2158.4,791.7 L2159.9,794.3 L2161.4,794.1 L2162.9,792.9 L2164.4,799.4 L2165.9,802.3 L2167.4,804.3 L2168.9,804.6 L2170.4,808.1 L2171.9,807.6 L2173.4,814.4 L2175.0,815.6 L2176.5,816.8 L2178.0,818.5 L2179.5,826.7 L2181.0,830.9 L2182.5,828.5 L2184.0,836.5 L2185.5,837.6 L2187.0,839.6 L2188.5,844.2 L2190.0,851.1 L2191.5,855.6 L2193.0,854.3 L2194.5,862.0 L2196.0,862.4 L2197.6,870.9 L2199.1,872.6 L2200.6,878.0 L2202.1,882.4 L2203.6,886.8 L2205.1,891.2 L2206.6,895.7 L2208.1,900.3 L2209.6,904.9 L2211.1,909.5 L2212.6,914.2 L2214.1,918.9 L2215.6,923.7 L2217.1,928.5 L2218.7,933.3 L2220.2,938.2 L2221.7,943.1 L2223.2,948.0 L2224.7,953.0 L2226.2,957.9 L2227.7,962.9 L2229.2,967.9 L2230.7,973.0 L2232.2,978.0 L2233.7,983.1 L2235.2,988.2 L2236.7,993.2 L2238.2,998.3 L2239.8,1003.4 L2241.3,1008.6 L2242.8,1013.7 L2244.3,1018.8 L2245.8,1023.9 L2247.3,1029.1 L2248.8,1034.2 L2250.3,1039.3 L2251.8,1044.5 L2253.3,1049.6 L2254.8,1054.7 L2256.3,1059.8 L2257.8,1064.9 L2259.3,1070.0 L2260.8,1075.1 L2262.4,1080.2 L2263.9,1085.3 L2265.4,1090.3 L2266.9,1095.4 L2268.4,1100.4 L2269.9,1105.5 L2271.4,1110.5 L2272.9,1115.4 L2274.4,1120.4 L2275.9,1125.4 L2277.4,1130.3 L2278.9,1135.2 L2280.4,1140.1 L2281.9,1144.9 L2283.5,1149.8 L2285.0,1154.6 L2286.5,1159.4 L2288.0,1164.1 L2289.5,1168.9 L2291.0,1173.6 L2292.5,1178.2 L2294.0,1182.9 L2295.5,1187.5 L2297.0,1192.1 L2298.5,1196.6 L2300.0,1201.1 L2301.5,1205.6 L2303.0,1210.0 L2304.6,1214.4 L2306.1,1218.7 L2307.6,1223.0 L2309.1,1227.3 L2310.6,1231.5 L2312.1,1235.7 L2313.6,1239.8 L2315.1,1243.9 L2316.6,1247.9 L2318.1,1251.9 L2319.6,1255.8 L2321.1,1259.7 L2322.6,1263.6 L2324.1,1267.4 L2325.7,1271.1 L2327.2,1274.8 L2328.7,1278.4 L2330.2,1282.0 L2331.7,1285.5 L2333.2,1289.0 L2334.7,1292.4 L2336.2,1295.7 L2337.7,1299.0 L2339.2,1302.2 L2340.7,1305.4 L2342.2,1308.5 L2343.7,1311.6 L2345.2,1314.6 L2346.7,1317.5 L2348.3,1320.4 L2349.8,1323.2 L2351.3,1326.0 L2352.8,1328.7 L2354.3,1331.3 L2355.8,1333.9 L2357.3,1336.4 L2358.8,1338.9 L2360.3,1341.3 L2361.8,1343.6 L2363.3,1345.9 L2364.8,1348.2 L2366.3,1350.3 L2367.8,1352.4 L2369.4,1354.5 L2370.9,1356.5 L2372.4,1358.4 L2373.9,1360.3 L2375.4,1362.2 L2376.9,1364.0 L2378.4,1365.7 L2379.9,1367.4 L2381.4,1369.0 L2382.9,1370.6 L2384.4,1372.1 L2385.9,1373.6 L2387.4,1375.0 L2388.9,1376.4 L2390.5,1377.7 L2392.0,1379.0 L2393.5,1380.2 L2395.0,1381.4 L2396.5,1382.6 L2398.0,1383.7 L2399.5,1384.8 L2401.0,1385.8 L2402.5,1386.8 L2404.0,1387.7 L2405.5,1388.6 L2407.0,1389.5 L2408.5,1390.4 L2410.0,1391.2 L2411.6,1392.0 L2413.1,1392.7 L2414.6,1393.4 L2416.1,1394.1 L2417.6,1394.7 L2419.1,1395.4 L2420.6,1396.0 L2422.1,1396.5 L2423.6,1397.1 L2425.1,1397.6 L2426.6,1398.1 L2428.1,1398.6 L2429.6,1399.0 L2431.1,1399.4 L2432.6,1399.8 L2434.2,1400.2 L2435.7,1400.6 L2437.2,1400.9 L2438.7,1401.3 L2440.2,1401.6 L2441.7,1401.9 L2443.2,1402.2 L2444.7,1402.4 L2446.2,1402.7 L2447.7,1402.9 L2449.2,1403.1 L2450.7,1403.3 L2452.2,1403.5 L2453.7,1403.7 L2455.3,1403.9 L2456.8,1404.1 L2458.3,1404.2 L2459.8,1404.4 L2461.3,1404.5 L2462.8,1404.6 L2464.3,1404.8 L2465.8,1404.9 L2467.3,1405.0 L2468.8,1405.1 L2470.3,1405.2 L2471.8,1405.3 L2473.3,1405.4 L2474.8,1405.4 L2476.4,1405.5 L2477.9,1405.6 L2479.4,1405.6 L2480.9,1405.7 L2482.4,1405.8 L2483.9,1405.8 L2485.4,1405.9 L2486.9,1405.9 L2488.4,1405.9 L2489.9,1406.0 L2491.4,1406.0 L2492.9,1406.0 L2494.4,1406.1 L2495.9,1406.1 L2497.4,1406.1 L2499.0,1406.2 L2500.5,1406.2 L2502.0,1406.2 L2517.0,1406.3 L2532.1,1406.4 L2547.2,1406.4 L2562.2,1406.4 L2577.3,1406.4 L2592.4,1406.4 L2607.5,1406.4 L2622.5,1406.4 L2637.6,1406.4 L2652.7,1406.4 L2667.7,1406.4 L2682.8,1406.4 L2697.9,1406.4 L2712.9,1406.4 L2728.0,1406.4 L2743.1,1406.4 L2758.2,1406.4 L2773.2,1406.4 L2788.3,1406.4 L2803.4,1406.4 L2818.4,1406.4 L2830.6,1406.4" fill="none" stroke="#7474e2" stroke-width="4.4" stroke-linejoin="round"/>
<path d="M2068.3,894.6 L2139.0,639.6 L2209.7,894.6" fill="none" stroke="rgba(100,195,130,0.6)" stroke-width="4.4" stroke-linejoin="round"/>
<path d="M1432.0,1400.3 L1928.0,1400.3 L2068.3,894.6 L2209.7,894.6 L2350.0,1400.3 L2830.6,1400.3" fill="none" stroke="rgba(211,84,76,0.62)" stroke-width="4.4" stroke-linejoin="round"/>
<line x1="2223" y1="622" x2="2223" y2="1438" stroke="#d4952a" stroke-width="4" stroke-dasharray="8.6 3.4"/>
<line x1="1432" y1="622" x2="1432" y2="1439" stroke="#666" stroke-width="2.2"/>
<line x1="1421" y1="1438" x2="2830.6" y2="1438" stroke="#666" stroke-width="2.2"/>
<line x1="1421" y1="622.9" x2="1432" y2="622.9" stroke="#666" stroke-width="2.2"/>
<text x="1410" y="630.9" font-family="Liberation Serif" font-size="24" fill="#777" text-anchor="end">$ 1</text>
<line x1="1421" y1="758.8" x2="1432" y2="758.8" stroke="#666" stroke-width="2.2"/>
<text x="1410" y="766.8" font-family="Liberation Serif" font-size="24" fill="#777" text-anchor="end">$ 0.5</text>
<line x1="1421" y1="894.6" x2="1432" y2="894.6" stroke="#666" stroke-width="2.2"/>
<text x="1410" y="902.6" font-family="Liberation Serif" font-size="24" fill="#777" text-anchor="end">$ 0</text>
<line x1="1421" y1="1030.4" x2="1432" y2="1030.4" stroke="#666" stroke-width="2.2"/>
<text x="1410" y="1038.4" font-family="Liberation Serif" font-size="24" fill="#777" text-anchor="end">$ -0.5</text>
<line x1="1421" y1="1166.3" x2="1432" y2="1166.3" stroke="#666" stroke-width="2.2"/>
<text x="1410" y="1174.3" font-family="Liberation Serif" font-size="24" fill="#777" text-anchor="end">$ -1</text>
<line x1="1421" y1="1302.1" x2="1432" y2="1302.1" stroke="#666" stroke-width="2.2"/>
<text x="1410" y="1310.1" font-family="Liberation Serif" font-size="24" fill="#777" text-anchor="end">$ -1.5</text>
<line x1="1421" y1="1437.9" x2="1432" y2="1437.9" stroke="#666" stroke-width="2.2"/>
<text x="1410" y="1445.9" font-family="Liberation Serif" font-size="24" fill="#777" text-anchor="end">$ -2</text>
<line x1="1445.8" y1="1438" x2="1445.8" y2="1448" stroke="#666" stroke-width="2.2"/>
<text x="1445.8" y="1477.6" font-family="Liberation Serif" font-size="24" fill="#777" text-anchor="middle">3,600</text>
<line x1="1596.5" y1="1438" x2="1596.5" y2="1448" stroke="#666" stroke-width="2.2"/>
<text x="1596.5" y="1477.6" font-family="Liberation Serif" font-size="24" fill="#777" text-anchor="middle">3,800</text>
<line x1="1747.2" y1="1438" x2="1747.2" y2="1448" stroke="#666" stroke-width="2.2"/>
<text x="1747.2" y="1477.6" font-family="Liberation Serif" font-size="24" fill="#777" text-anchor="middle">4,000</text>
<line x1="1897.9" y1="1438" x2="1897.9" y2="1448" stroke="#666" stroke-width="2.2"/>
<text x="1897.9" y="1477.6" font-family="Liberation Serif" font-size="24" fill="#777" text-anchor="middle">4,200</text>
<line x1="2048.6" y1="1438" x2="2048.6" y2="1448" stroke="#666" stroke-width="2.2"/>
<text x="2048.6" y="1477.6" font-family="Liberation Serif" font-size="24" fill="#777" text-anchor="middle">4,400</text>
<line x1="2199.3" y1="1438" x2="2199.3" y2="1448" stroke="#666" stroke-width="2.2"/>
<text x="2199.3" y="1477.6" font-family="Liberation Serif" font-size="24" fill="#777" text-anchor="middle">4,600</text>
<line x1="2350.0" y1="1438" x2="2350.0" y2="1448" stroke="#666" stroke-width="2.2"/>
<text x="2350.0" y="1477.6" font-family="Liberation Serif" font-size="24" fill="#777" text-anchor="middle">4,800</text>
<line x1="2500.7" y1="1438" x2="2500.7" y2="1448" stroke="#666" stroke-width="2.2"/>
<text x="2500.7" y="1477.6" font-family="Liberation Serif" font-size="24" fill="#777" text-anchor="middle">5,000</text>
<line x1="2651.4" y1="1438" x2="2651.4" y2="1448" stroke="#666" stroke-width="2.2"/>
<text x="2651.4" y="1477.6" font-family="Liberation Serif" font-size="24" fill="#777" text-anchor="middle">5,200</text>
<line x1="2802.1" y1="1438" x2="2802.1" y2="1448" stroke="#666" stroke-width="2.2"/>
<text x="2802.1" y="1477.6" font-family="Liberation Serif" font-size="24" fill="#777" text-anchor="middle">5,400</text>
<text x="2074" y="613.7" font-family="Liberation Serif" font-size="24" fill="#d4952a">MTM: $ -0.23</text>
<rect x="2225.8" y="598" width="2.6" height="16" fill="#d4952a"/>
<text x="2242" y="613.7" font-family="Liberation Serif" font-size="24" fill="#d4952a">Spot: $ 4,633</text>
<rect x="2691" y="579" width="162" height="52" fill="#fff" stroke="#3d8fe8" stroke-width="2"/>
<line x1="2771" y1="579" x2="2771" y2="631" stroke="#3d8fe8" stroke-width="2"/>
<g fill="#000">
<rect x="2729" y="595" width="4" height="21"/><rect x="2720" y="603" width="21" height="4"/>
<path d="M2731,590.8 L2736.2,596.2 L2725.8,596.2 Z"/><path d="M2731,619 L2736.2,613.6 L2725.8,613.6 Z"/>
<path d="M2716,605 L2721.4,599.8 L2721.4,610.2 Z"/><path d="M2745.5,605 L2740.1,599.8 L2740.1,610.2 Z"/>
</g>
<path d="M2818.2,593.5 A12,12 0 1 1 2804.2,597.5" fill="none" stroke="#000" stroke-width="4.4"/>
<path d="M2796,597.8 L2805.6,593.5 L2809.8,602.4 Z" fill="#000"/>
</svg>
</body></html>
